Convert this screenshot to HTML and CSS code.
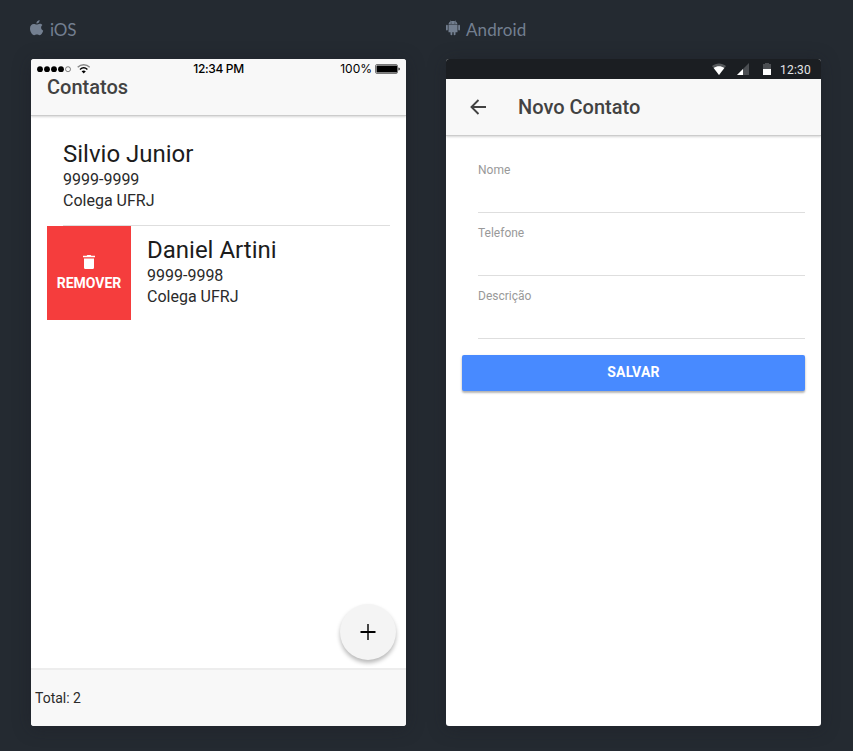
FILE: index.html
```html
<!DOCTYPE html>
<html lang="pt-BR">
<head>
<meta charset="utf-8">
<title>Contatos</title>
<link rel="stylesheet" href="styles.css">
</head>
<body>
<main class="lab">
  <section class="preview">
    <h2 class="platform">
      <svg class="platform-icon" width="14" height="16" viewBox="0 0 14 16" fill="currentColor"><path d="M9.600 0C9.800 1.700 8.400 3.600 6.400 3.600 6.200 1.900 7.900.3 9.600 0zM12.400 5.100c-2 1.500-1.600 4.500.8 5.600-.6 2-2 4.500-3.500 4.500-1.100 0-1.600-.6-2.800-.6s-1.800.6-2.800.6C2.300 15.200 0 11.700 0 8.500c0-3 1.700-4.600 3.700-4.600 1.200 0 2.100.7 3 .7.800 0 1.800-.8 3.200-.8.9 0 1.900.4 2.500 1.300z"/></svg>
      <span class="name-ios">iOS</span>
    </h2>
    <div class="phone">
      <header class="header header-ios">
        <div class="status-ios">
          <span class="signal">
            <svg width="54" height="12" viewBox="0 0 54 12"><g fill="#000"><circle cx="3" cy="6.200" r="2.900"/><circle cx="10" cy="6.200" r="2.900"/><circle cx="17" cy="6.200" r="2.900"/><circle cx="24" cy="6.200" r="2.900"/></g><circle cx="31" cy="6.200" r="2.500" fill="none" stroke="#333" stroke-width=".6"/><path d="M41 4.300c3.400-3.300 8.600-3.300 12 0" transform="translate(-.3 0)" fill="none" stroke="#888" stroke-width="1.500"/><path d="M43 6.500c2.200-2 5.200-2 7.400 0" fill="none" stroke="#000" stroke-width="1.500"/><path d="M44.600 8.200c1.300-1.100 3-1.100 4.200 0l-2.100 2.200z" fill="#000"/></svg>
          </span>
          <span class="clock-ios">12:34 PM</span>
          <span class="battery-ios">100%
            <svg width="25" height="10" viewBox="0 0 25 10"><rect x=".5" y=".5" width="22" height="9" rx="1.500" fill="#fff" stroke="#777"/><rect x="1.500" y="1.500" width="20.500" height="7" rx=".6"/><path d="M23.500 3.500c1 .3 1.200.8 1.200 1.500s-.2 1.200-1.200 1.500z"/></svg>
          </span>
        </div>
        <h1 class="title title-ios">Contatos</h1>
      </header>
      <div class="contacts">
        <article class="contact first">
          <div class="info"><h2 class="person">Silvio Junior</h2><p>9999-9999</p><p>Colega UFRJ</p></div>
        </article>
        <article class="contact second">
          <button class="remove">
            <svg width="12" height="14" viewBox="0 0 12 14" fill="#fff"><path d="M1 3.500h10v9c0 .8-.5 1.500-1.300 1.500H2.300C1.500 14 1 13.300 1 12.500zM3.700.7 4.300 0h3.400l.6.7H12v1.500H0V.7z"/></svg>
            <span>REMOVER</span>
          </button>
          <div class="info"><h2 class="person">Daniel Artini</h2><p>9999-9998</p><p>Colega UFRJ</p></div>
        </article>
      </div>
      <button class="fab"><svg width="16" height="16" viewBox="0 0 16 16"><path d="M8 0v16" stroke="#444" stroke-width="2"/><path d="M.5 8h15" stroke="#000" stroke-width="2"/></svg></button>
      <footer class="footer">Total: 2</footer>
    </div>
  </section>
  <section class="preview">
    <h2 class="platform platform-android">
      <svg class="platform-icon" width="14" height="16" viewBox="0 0 14 16" fill="currentColor"><path d="M2.500 4.500C2.600 3 3.500 1.900 4.700 1.300L4.200.4l.3-.2.6 1c1.200-.4 2.600-.4 3.800 0l.6-1 .3.200-.5.900c1.200.6 2.100 1.700 2.200 3.200zM2.500 5.100h9v7.100h-2v2.200c0 1-1.800 1-1.800 0v-2.200H6.300v2.200c0 1-1.800 1-1.800 0v-2.200h-2z"/><rect y="4.800" width="1.800" height="5.700" rx=".9"/><rect x="12.200" y="4.800" width="1.800" height="5.700" rx=".9"/><g fill="#242a31"><circle cx="5.100" cy="3" r=".5"/><circle cx="8.900" cy="3" r=".5"/></g></svg>
      <span class="name-android">Android</span>
    </h2>
    <div class="phone">
      <div class="status-android">
        <svg width="60" height="14" viewBox="0 0 60 14"><path d="M0 3c4-3.400 10-3.400 14 0L7 12z" fill="#56595c"/><path d="M1.700 5c3.300-2.300 7.300-2.300 10.600 0L7 12z" fill="#fff"/><path d="M25 12 37 0v12z" fill="#4b4e52"/><path d="m25 12 6-6v6z" fill="#fff"/><path d="M51 1h2V0h4v1h2v6h-8z" fill="#4b4e52"/><path d="M51 6h8v6h-8z" fill="#fff"/></svg>
        <span>12:30</span>
      </div>
      <header class="header header-android">
        <svg width="16" height="16" viewBox="0 0 16 16"><path d="M16 8H1.500M8.500 1l-7 7 7 7" fill="none" stroke="#424242" stroke-width="1.900"/></svg>
        <h1 class="title title-android">Novo Contato</h1>
      </header>
      <form class="form">
        <div class="field"><label>Nome</label></div>
        <div class="field"><label>Telefone</label></div>
        <div class="field"><label>Descrição</label></div>
        <button class="save" type="button">SALVAR</button>
      </form>
    </div>
  </section>
</main>
</body>
</html>
```
FILE: styles.css
```css
* { box-sizing: border-box; }
body {
  margin: 0;
  background: #242a31;
  font-family: Roboto, sans-serif;
  overflow: hidden;
}
h1, h2, p { margin: 0; font-weight: inherit; }
button { border: 0; padding: 0; font-family: inherit; }
svg { display: block; flex: none; }
.lab {
  display: flex;
  gap: 40px;
  height: 751px;
  padding: 0 31px;
}
.preview { width: 375px; flex: none; }
.platform {
  display: flex;
  height: 59px;
  margin-left: -1px;
  padding-top: 20px;
  gap: 6px;
  color: #737f90;
  font: 400 17px/20px Lato, sans-serif;
}
.platform-android { margin-left: 0; }
.name-ios { letter-spacing: -.1px; }
.name-android { letter-spacing: .1px; }
.phone {
  position: relative;
  display: flex;
  flex-direction: column;
  height: 667px;
  overflow: hidden;
  border-radius: 3px;
  background: #fff;
  box-shadow: 0 2px 18px rgba(25, 25, 35, .35);
}
.header {
  flex: none;
  height: 56px;
  background: #f8f8f8;
  color: #424242;
  box-shadow: 0 1px 0 #ccc, 0 2px 2px rgba(0, 0, 0, .16);
}
.status-ios {
  display: grid;
  grid-template-columns: 1fr auto 1fr;
  align-items: center;
  height: 20px;
  padding: 0 6px;
  color: #000;
  font: 500 12px/20px Inter, sans-serif;
}
.clock-ios { letter-spacing: -.35px; }
.battery-ios {
  display: flex;
  align-items: center;
  justify-content: flex-end;
  gap: 3px;
  font-weight: 400;
}
.title { font-size: 20px; font-weight: 500; line-height: 24px; }
.title-ios { margin: -4px 0 0 16px; }
.contacts { flex: 1; padding: 17px 16px; }
.contact { display: flex; height: 94px; }
.info {
  flex: 1;
  margin-left: 16px;
  padding-top: 7px;
  color: #2a2a2a;
  font-size: 16px;
  line-height: 21px;
  font-weight: 400;
}
.first .info { border-bottom: 1px solid #dedede; }
.second .info { padding-top: 9px; }
.person { color: #1c1c1c; font-size: 24px; line-height: 30px; }
.remove {
  display: flex;
  flex-direction: column;
  align-items: center;
  width: 84px;
  height: 94px;
  padding-top: 29px;
  gap: 6px;
  background: #f53d3d;
  color: #fff;
  font-size: 14px;
  font-weight: 700;
  line-height: 16px;
}
.fab {
  position: absolute;
  right: 10px;
  bottom: 66px;
  display: grid;
  place-items: center;
  width: 56px;
  height: 56px;
  border-radius: 50%;
  background: #f4f4f4;
  box-shadow: 0 3px 4px rgba(0, 0, 0, .28);
}
.footer {
  height: 58px;
  flex: none;
  padding: 1px 4px 0;
  border-top: 2px solid #ededed;
  background: #f8f8f8;
  color: #2a2a2a;
  font-size: 14px;
  line-height: 55px;
}
.status-android {
  display: flex;
  flex: none;
  height: 20px;
  padding: 4px 10px 0 0;
  justify-content: flex-end;
  gap: 8px;
  background: #1b1e22;
  color: #e4e5e6;
  font-size: 12px;
  line-height: 14px;
  letter-spacing: .2px;
}
.header-android { display: flex; align-items: center; padding-left: 24px; }
.title-android { margin-left: 32px; }
.form { padding: 15px 16px; }
.field {
  height: 63px;
  margin-left: 16px;
  padding-top: 12px;
  border-bottom: 1px solid #dedede;
  color: #999;
  font-size: 12px;
  line-height: 16px;
}
.field label { display: block; }
.save {
  display: block;
  width: 100%;
  height: 36px;
  margin-top: 16px;
  padding-bottom: 2px;
  border-radius: 2px;
  background: #488aff;
  color: #fff;
  font-size: 14px;
  font-weight: 700;
  line-height: 34px;
  letter-spacing: .2px;
  box-shadow: 0 2px 2px rgba(0, 0, 0, .22), 0 1px 3px rgba(0, 0, 0, .15);
}
```
